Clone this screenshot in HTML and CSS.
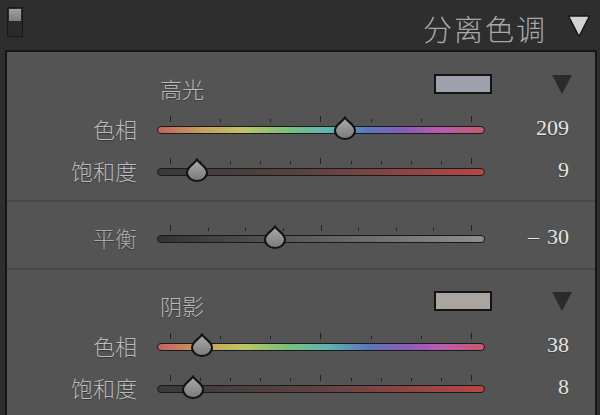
FILE: index.html
```html
<!DOCTYPE html>
<html>
<head>
<meta charset="utf-8">
<link rel="stylesheet" href="styles.css">
</head>
<body>
<div class="header">
  <div class="toggle"><div class="toggle-top"></div></div>
  <div class="title">分离色调</div>
  <svg class="collapse" width="24" height="24" viewBox="0 0 24 24"><polygon points="1.5,2 22.5,2 12,22.5" fill="#d2d2d2" stroke="#161616" stroke-width="1.5" stroke-linejoin="round"/></svg>
</div>
<div class="panel">
  <section class="group first">
    <div class="group-head">
      <span class="group-title">高光</span>
      <span class="swatch swatch-hi"></span>
      <svg class="mini-tri" width="20" height="19" viewBox="0 0 20 19"><polygon points="0,0 20,0 10,19" fill="#2b2b2b"/></svg>
    </div>
    <div class="row">
      <div class="label">色相</div>
      <div class="slider">
        <div class="ticks"><i class="tall"></i><i></i><i></i><i class="tall"></i><i></i><i></i><i class="tall"></i></div>
        <div class="track hue"></div>
        <svg class="thumb" style="left:177px" width="22" height="24" viewBox="0 0 22 24"><defs><linearGradient id="g1" x1="0" y1="0" x2="0" y2="1"><stop offset="0" stop-color="#ababab"/><stop offset="1" stop-color="#7a7a7a"/></linearGradient></defs><path d="M11 1.5 C13 5.5 21 8.5 21 14.5 A10 8.5 0 0 1 1 14.5 C1 8.5 9 5.5 11 1.5 Z" fill="url(#g1)" stroke="#121212" stroke-width="2"/></svg>
      </div>
      <div class="value">209</div>
    </div>
    <div class="row">
      <div class="label">饱和度</div>
      <div class="slider">
        <div class="ticks"><i class="tall"></i><i></i><i></i><i></i><i></i><i class="tall"></i><i></i><i></i><i></i><i></i><i class="tall"></i></div>
        <div class="track sat"></div>
        <svg class="thumb" style="left:29px" width="22" height="24" viewBox="0 0 22 24"><path d="M11 1.5 C13 5.5 21 8.5 21 14.5 A10 8.5 0 0 1 1 14.5 C1 8.5 9 5.5 11 1.5 Z" fill="url(#g1)" stroke="#121212" stroke-width="2"/></svg>
      </div>
      <div class="value">9</div>
    </div>
  </section>
  <div class="divider"></div>
  <section class="group balance">
    <div class="row">
      <div class="label dim">平衡</div>
      <div class="slider">
        <div class="ticks"><i class="tall"></i><i></i><i></i><i></i><i class="tall"></i><i></i><i></i><i></i><i class="tall"></i></div>
        <div class="track bal"></div>
        <svg class="thumb" style="left:107px" width="22" height="24" viewBox="0 0 22 24"><path d="M11 1.5 C13 5.5 21 8.5 21 14.5 A10 8.5 0 0 1 1 14.5 C1 8.5 9 5.5 11 1.5 Z" fill="url(#g1)" stroke="#121212" stroke-width="2"/></svg>
      </div>
      <div class="value"><span class="dash">–</span>30</div>
    </div>
  </section>
  <div class="divider"></div>
  <section class="group shadow">
    <div class="group-head">
      <span class="group-title">阴影</span>
      <span class="swatch swatch-sh"></span>
      <svg class="mini-tri" width="20" height="19" viewBox="0 0 20 19"><polygon points="0,0 20,0 10,19" fill="#2b2b2b"/></svg>
    </div>
    <div class="row">
      <div class="label">色相</div>
      <div class="slider">
        <div class="ticks"><i class="tall"></i><i></i><i></i><i class="tall"></i><i></i><i></i><i class="tall"></i></div>
        <div class="track hue"></div>
        <svg class="thumb" style="left:34px" width="22" height="24" viewBox="0 0 22 24"><path d="M11 1.5 C13 5.5 21 8.5 21 14.5 A10 8.5 0 0 1 1 14.5 C1 8.5 9 5.5 11 1.5 Z" fill="url(#g1)" stroke="#121212" stroke-width="2"/></svg>
      </div>
      <div class="value">38</div>
    </div>
    <div class="row">
      <div class="label">饱和度</div>
      <div class="slider">
        <div class="ticks"><i class="tall"></i><i></i><i></i><i></i><i></i><i class="tall"></i><i></i><i></i><i></i><i></i><i class="tall"></i></div>
        <div class="track sat"></div>
        <svg class="thumb" style="left:25px" width="22" height="24" viewBox="0 0 22 24"><path d="M11 1.5 C13 5.5 21 8.5 21 14.5 A10 8.5 0 0 1 1 14.5 C1 8.5 9 5.5 11 1.5 Z" fill="url(#g1)" stroke="#121212" stroke-width="2"/></svg>
      </div>
      <div class="value">8</div>
    </div>
  </section>
</div>
</body>
</html>
```
FILE: styles.css
```css
* { box-sizing: border-box; }
html, body { margin: 0; padding: 0; }
body {
  width: 600px;
  height: 415px;
  overflow: hidden;
  background: #2e2e2e;
  font-family: "Noto Sans CJK SC", "Noto Sans", sans-serif;
}
.header {
  height: 50px;
  display: flex;
  align-items: flex-start;
}
.toggle {
  margin: 7px 0 0 7px;
  width: 16px;
  height: 30px;
  border: 1px solid #181818;
  background: #2a2a2a;
  padding: 1px;
}
.toggle-top {
  height: 12px;
  background: linear-gradient(#a0a0a0, #7e7e7e);
}
.title {
  margin-left: auto;
  margin-top: 8px;
  font-size: 29px;
  font-weight: 300;
  line-height: 40px;
  color: #a8a8a8;
  letter-spacing: 2px;
}
.collapse {
  margin: 14px 9px 0 20px;
}
.panel {
  margin: 0 3px 0 5px;
  height: 380px;
  border: 2px solid #161616;
  border-bottom: none;
  background: #545454;
}
.group.first { padding-top: 15px; padding-bottom: 7px; }
.group.balance { padding-top: 16px; padding-bottom: 8px; }
.group.shadow { padding-top: 14px; }
.divider {
  height: 2px;
  background: #464646;
}
.group-head {
  height: 42px;
  display: flex;
  align-items: center;
  padding-left: 153px;
  padding-right: 23px;
}
.group-title {
  font-size: 22px;
  font-weight: 300;
  color: #bababa;
  text-shadow: 0 1px 1px rgba(0,0,0,0.35);
}
.swatch {
  margin-left: auto;
  width: 58px;
  height: 20px;
  border: 2px solid #141414;
  margin-top: -8px;
}
.swatch-hi { background: #9ca1ab; }
.swatch-sh { background: #aaa59f; }
.mini-tri {
  margin-left: 60px;
  margin-top: -8px;
}
.row {
  height: 42px;
  display: flex;
  align-items: center;
}
.label {
  width: 130px;
  margin-right: 20px;
  text-align: right;
  font-size: 22px;
  font-weight: 300;
  line-height: 30px;
  margin-top: -4px;
  color: #bbbbbb;
  text-shadow: 0 1px 1px rgba(0,0,0,0.35);
}
.label.dim { color: #a9a9a9; }
.slider {
  position: relative;
  width: 328px;
  height: 42px;
  display: flex;
  flex-direction: column;
  justify-content: center;
}
.ticks {
  margin-top: -10px;
  height: 6px;
  margin-bottom: 4px;
  padding: 0 13px;
  display: flex;
  justify-content: space-between;
  align-items: flex-end;
}
.ticks i {
  display: block;
  width: 1px;
  height: 3px;
  background: #222222;
}
.ticks i.tall { height: 6px; }
.track {
  height: 8px;
  border: 1.5px solid #1a1a1a;
  border-radius: 4px;
}
.track.hue {
  background: linear-gradient(90deg, #c56262 0%, #c7a25c 14%, #bfc464 26%, #78c07e 40%, #5fb6b0 52%, #5a78bc 64%, #8a5cba 76%, #b85cb2 86%, #c85a6a 100%);
}
.track.sat {
  background: linear-gradient(90deg, #3a3a3a 0%, #5a4242 45%, #b84646 100%);
}
.track.bal {
  background: linear-gradient(90deg, #333333 0%, #5c5c5c 45%, #8e8e8e 100%);
}
.thumb {
  position: absolute;
  top: 7px;
}
.value {
  width: 84px;
  text-align: right;
  font-family: "Liberation Serif", serif;
  font-size: 22px;
  color: #e4e4e4;
  margin-top: -4px;
  text-shadow: 0 1px 1px rgba(0,0,0,0.3);
}
.dash { margin-right: 8px; }
```
